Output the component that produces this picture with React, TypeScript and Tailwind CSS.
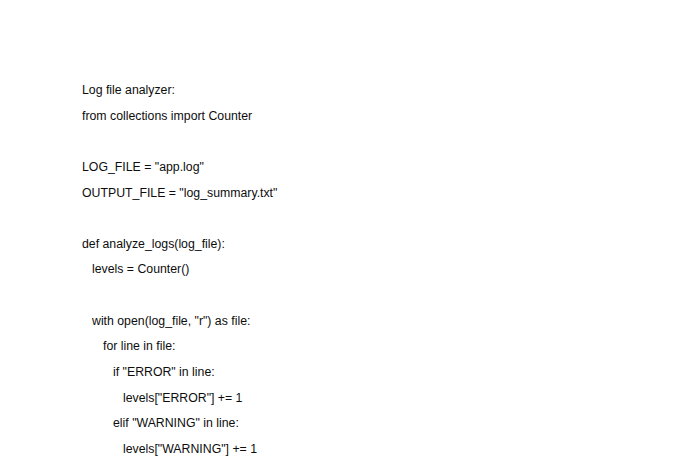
const lines: { text: string; indent: number }[] = [
  { text: "Log file analyzer:", indent: 0 },
  { text: "from collections import Counter", indent: 0 },
  { text: "", indent: 0 },
  { text: 'LOG_FILE = "app.log"', indent: 0 },
  { text: 'OUTPUT_FILE = "log_summary.txt"', indent: 0 },
  { text: "", indent: 0 },
  { text: "def analyze_logs(log_file):", indent: 0 },
  { text: "levels = Counter()", indent: 1 },
  { text: "", indent: 0 },
  { text: 'with open(log_file, "r") as file:', indent: 1 },
  { text: "for line in file:", indent: 2 },
  { text: 'if "ERROR" in line:', indent: 3 },
  { text: 'levels["ERROR"] += 1', indent: 4 },
  { text: 'elif "WARNING" in line:', indent: 3 },
  { text: 'levels["WARNING"] += 1', indent: 4 },
];

const indentClass = ["pl-0", "pl-[10px]", "pl-[21px]", "pl-[31px]", "pl-[41px]"];

export default function App() {
  return (
    <div className="w-[680px] h-[459px] overflow-hidden bg-white">
      <div className="pt-[78px] pl-[82px] font-['Liberation_Sans',sans-serif] text-[12.3px] leading-[25.64px] text-[#0d0d0d]">
        {lines.map((line, i) => (
          <p key={i} className={`h-[25.64px] whitespace-pre ${indentClass[line.indent]}`}>
            {line.text}
          </p>
        ))}
      </div>
    </div>
  );
}
